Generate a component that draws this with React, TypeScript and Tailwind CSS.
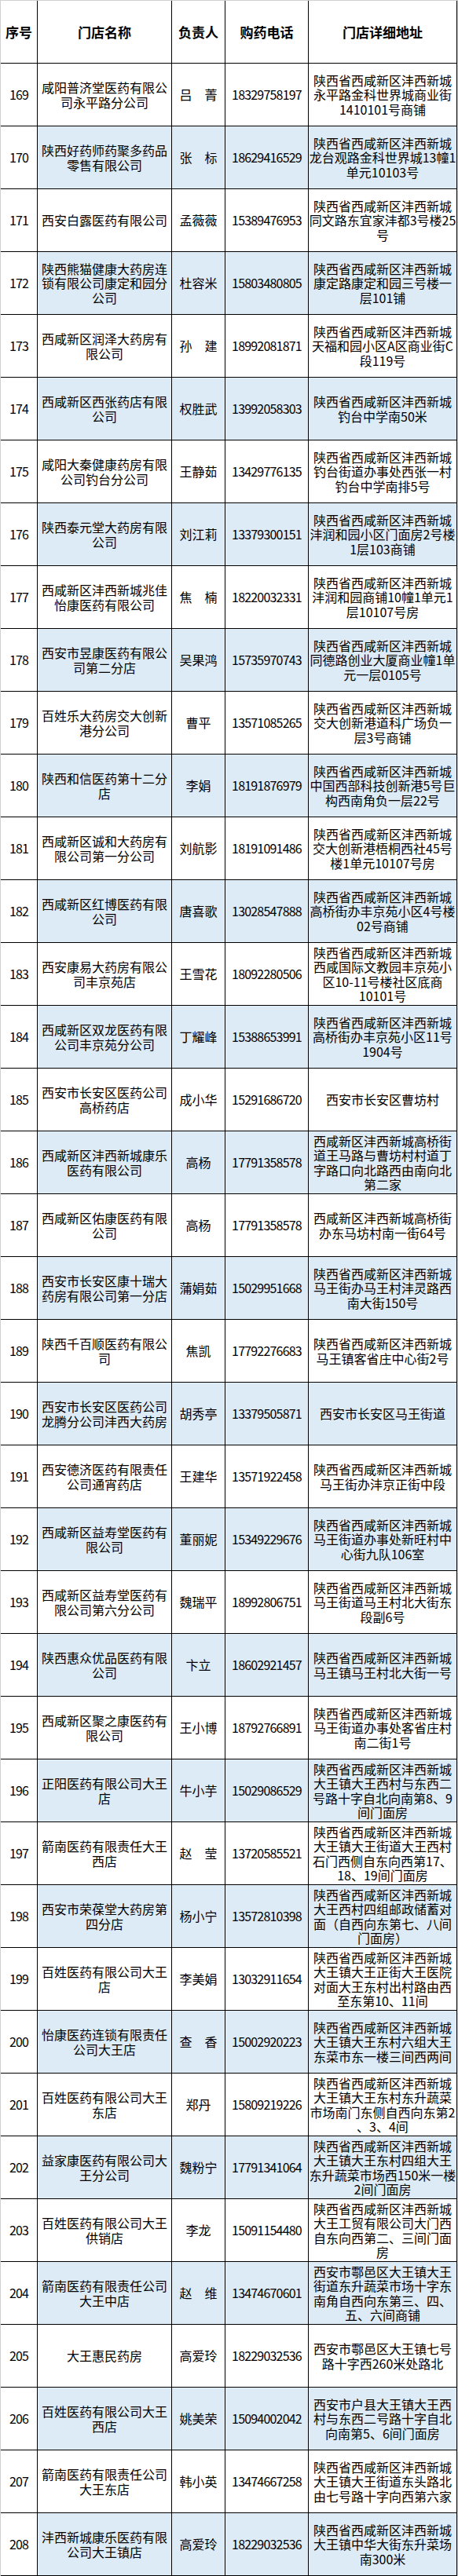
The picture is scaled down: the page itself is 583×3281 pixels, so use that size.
import React from "react";

const DATA = `169|咸阳普济堂医药有限公/司永平路分公司|吕　菁|18329758197|陕西省西咸新区沣西新城/永平路金科世界城商业街/1410101号商铺
170|陕西好药师药聚多药品/零售有限公司|张　标|18629416529|陕西省西咸新区沣西新城/龙台观路金科世界城13幢1/单元10103号
171|西安白露医药有限公司|孟薇薇|15389476953|陕西省西咸新区沣西新城/同文路东宜家沣都3号楼25/号
172|陕西熊猫健康大药房连/锁有限公司康定和园分/公司|杜容米|15803480805|陕西省西咸新区沣西新城/康定路康定和园三号楼一/层101铺
173|西咸新区润泽大药房有/限公司|孙　建|18992081871|陕西省西咸新区沣西新城/天福和园小区A区商业街C/段119号
174|西咸新区西张药店有限/公司|权胜武|13992058303|陕西省西咸新区沣西新城/钓台中学南50米
175|咸阳大秦健康药房有限/公司钓台分公司|王静茹|13429776135|陕西省西咸新区沣西新城/钓台街道办事处西张一村/钓台中学南排5号
176|陕西泰元堂大药房有限/公司|刘江莉|13379300151|陕西省西咸新区沣西新城/沣润和园小区门面房2号楼/1层103商铺
177|西咸新区沣西新城兆佳/怡康医药有限公司|焦　楠|18220032331|陕西省西咸新区沣西新城/沣润和园商铺10幢1单元1/层10107号房
178|西安市昱康医药有限公/司第二分店|吴果鸿|15735970743|陕西省西咸新区沣西新城/同德路创业大厦商业幢1单/元一层0105号
179|百姓乐大药房交大创新/港分公司|曹平|13571085265|陕西省西咸新区沣西新城/交大创新港道科广场负一/层3号商铺
180|陕西和信医药第十二分/店|李娟|18191876979|陕西省西咸新区沣西新城/中国西部科技创新港5号巨/构西南角负一层22号
181|西咸新区诚和大药房有/限公司第一分公司|刘航影|18191091486|陕西省西咸新区沣西新城/交大创新港梧桐西社45号/楼1单元10107号房
182|西咸新区红博医药有限/公司|唐喜歌|13028547888|陕西省西咸新区沣西新城/高桥街办丰京苑小区4号楼/02号商铺
183|西安康易大药房有限公/司丰京苑店|王雪花|18092280506|陕西省西咸新区沣西新城/西咸国际文教园丰京苑小/区10-11号楼社区底商/10101号
184|西咸新区双龙医药有限/公司丰京苑分公司|丁耀峰|15388653991|陕西省西咸新区沣西新城/高桥街办丰京苑小区11号/1904号
185|西安市长安区医药公司/高桥药店|成小华|15291686720|西安市长安区曹坊村
186|西咸新区沣西新城康乐/医药有限公司|高杨|17791358578|西咸新区沣西新城高桥街/道王马路与曹坊村村道丁/字路口向北路西由南向北/第二家
187|西咸新区佑康医药有限/公司|高杨|17791358578|西咸新区沣西新城高桥街/办东马坊村南一街64号
188|西安市长安区康十瑞大/药房有限公司第一分店|蒲娟茹|15029951668|陕西省西咸新区沣西新城/马王街办马王村沣灵路西/南大街150号
189|陕西千百顺医药有限公/司|焦凯|17792276683|陕西省西咸新区沣西新城/马王镇客省庄中心街2号
190|西安市长安区医药公司/龙腾分公司沣西大药房|胡秀亭|13379505871|西安市长安区马王街道
191|西安德济医药有限责任/公司通宵药店|王建华|13571922458|陕西省西咸新区沣西新城/马王街办沣京正街中段
192|西咸新区益寿堂医药有/限公司|董丽妮|15349229676|陕西省西咸新区沣西新城/马王街道办事处新旺村中/心街九队106室
193|西咸新区益寿堂医药有/限公司第六分公司|魏瑞平|18992806751|陕西省西咸新区沣西新城/马王街道马王村北大街东/段副6号
194|陕西惠众优品医药有限/公司|卞立|18602921457|陕西省西咸新区沣西新城/马王镇马王村北大街一号
195|西咸新区聚之康医药有/限公司|王小博|18792766891|陕西省西咸新区沣西新城/马王街道办事处客省庄村/南二街1号
196|正阳医药有限公司大王/店|牛小芋|15029086529|陕西省西咸新区沣西新城/大王镇大王西村与东西二/号路十字自北向南第8、9/间门面房
197|箭南医药有限责任大王/西店|赵　莹|13720585521|陕西省西咸新区沣西新城/大王镇大王街道大王西村/石门西侧自东向西第17、/18、19间门面房
198|西安市荣葆堂大药房第/四分店|杨小宁|13572810398|陕西省西咸新区沣西新城/大王西村四组邮政储蓄对/面（自西向东第七、八间/门面房）
199|百姓医药有限公司大王/店|李美娟|13032911654|陕西省西咸新区沣西新城/大王镇大王正街大王医院/对面大王东村出村路由西/至东第10、11间
200|怡康医药连锁有限责任/公司大王店|查　香|15002920223|陕西省西咸新区沣西新城/大王镇大王东村六组大王/东菜市东一楼三间西两间
201|百姓医药有限公司大王/东店|郑丹|15809219226|陕西省西咸新区沣西新城/大王镇大王东村东升蔬菜/市场南门东侧自西向东第2/、3、4间
202|益家康医药有限公司大/王分公司|魏粉宁|17791341064|陕西省西咸新区沣西新城/大王镇大王东村四组大王/东升蔬菜市场西150米一楼/2间门面房
203|百姓医药有限公司大王/供销店|李龙|15091154480|陕西省西咸新区沣西新城/大王工贸有限公司大门西/自东向西第二、三间门面/房
204|箭南医药有限责任公司/大王中店|赵　维|13474670601|西安市鄠邑区大王镇大王/街道东升蔬菜市场十字东/南角自西向东第三、四、/五、六间商铺
205|大王惠民药房|高爱玲|18229032536|西安市鄠邑区大王镇七号/路十字西260米处路北
206|百姓医药有限公司大王/西店|姚美荣|15094002042|西安市户县大王镇大王西/村与东西二号路十字自北/向南第5、6间门面房
207|箭南医药有限责任公司/大王东店|韩小英|13474667258|陕西省西咸新区沣西新城/大王镇大王街道东头路北/由七号路十字向西第六家
208|沣西新城康乐医药有限/公司大王镇店|高爱玲|18229032536|陕西省西咸新区沣西新城/大王镇中华大街东升菜场/南300米`;

type Row = { no: string; name: string[]; person: string; phone: string; addr: string[] };

const ROWS: Row[] = DATA.split("\n").map((l) => {
  const [no, name, person, phone, addr] = l.split("|");
  return { no, name: name.split("/"), person, phone, addr: addr.split("/") };
});

function Cell({
  lines,
  blue,
  digits,
}: {
  lines: string[];
  blue?: boolean;
  digits?: boolean;
}) {
  return (
    <div
      className={`flex h-[80px] flex-col items-center justify-center border-b border-r border-black text-center text-[16px] leading-[18.3px] text-black ${
        blue ? "bg-[#DDEBF7]" : "bg-white"
      } ${digits ? "tracking-[-0.8px]" : ""}`}
    >
      {lines.map((t, i) => (
        <div key={i} className="whitespace-nowrap">
          {t}
        </div>
      ))}
    </div>
  );
}

function HeadCell({ text }: { text: string }) {
  return (
    <div className="flex h-[80px] items-center justify-center border-b border-r border-black bg-white text-[17px] font-bold text-black">
      {text}
    </div>
  );
}

export default function App() {
  return (
    <div className="w-[583px] bg-white font-['Noto_Sans_CJK_SC','Liberation_Sans',sans-serif]">
      <div className="border-l border-r border-t border-[#d0d0d0]">
        <div className="grid grid-cols-[47px_171px_68px_106px_189px]">
          <HeadCell text="序号" />
          <HeadCell text="门店名称" />
          <HeadCell text="负责人" />
          <HeadCell text="购药电话" />
          <HeadCell text="门店详细地址" />
          {ROWS.map((r, i) => {
            const blue = i % 2 === 1;
            return (
              <React.Fragment key={r.no}>
                <Cell lines={[r.no]} digits />
                <Cell lines={r.name} blue={blue} />
                <Cell lines={[r.person]} blue={blue} />
                <Cell lines={[r.phone]} blue={blue} digits />
                <Cell lines={r.addr} blue={blue} />
              </React.Fragment>
            );
          })}
        </div>
      </div>
    </div>
  );
}
